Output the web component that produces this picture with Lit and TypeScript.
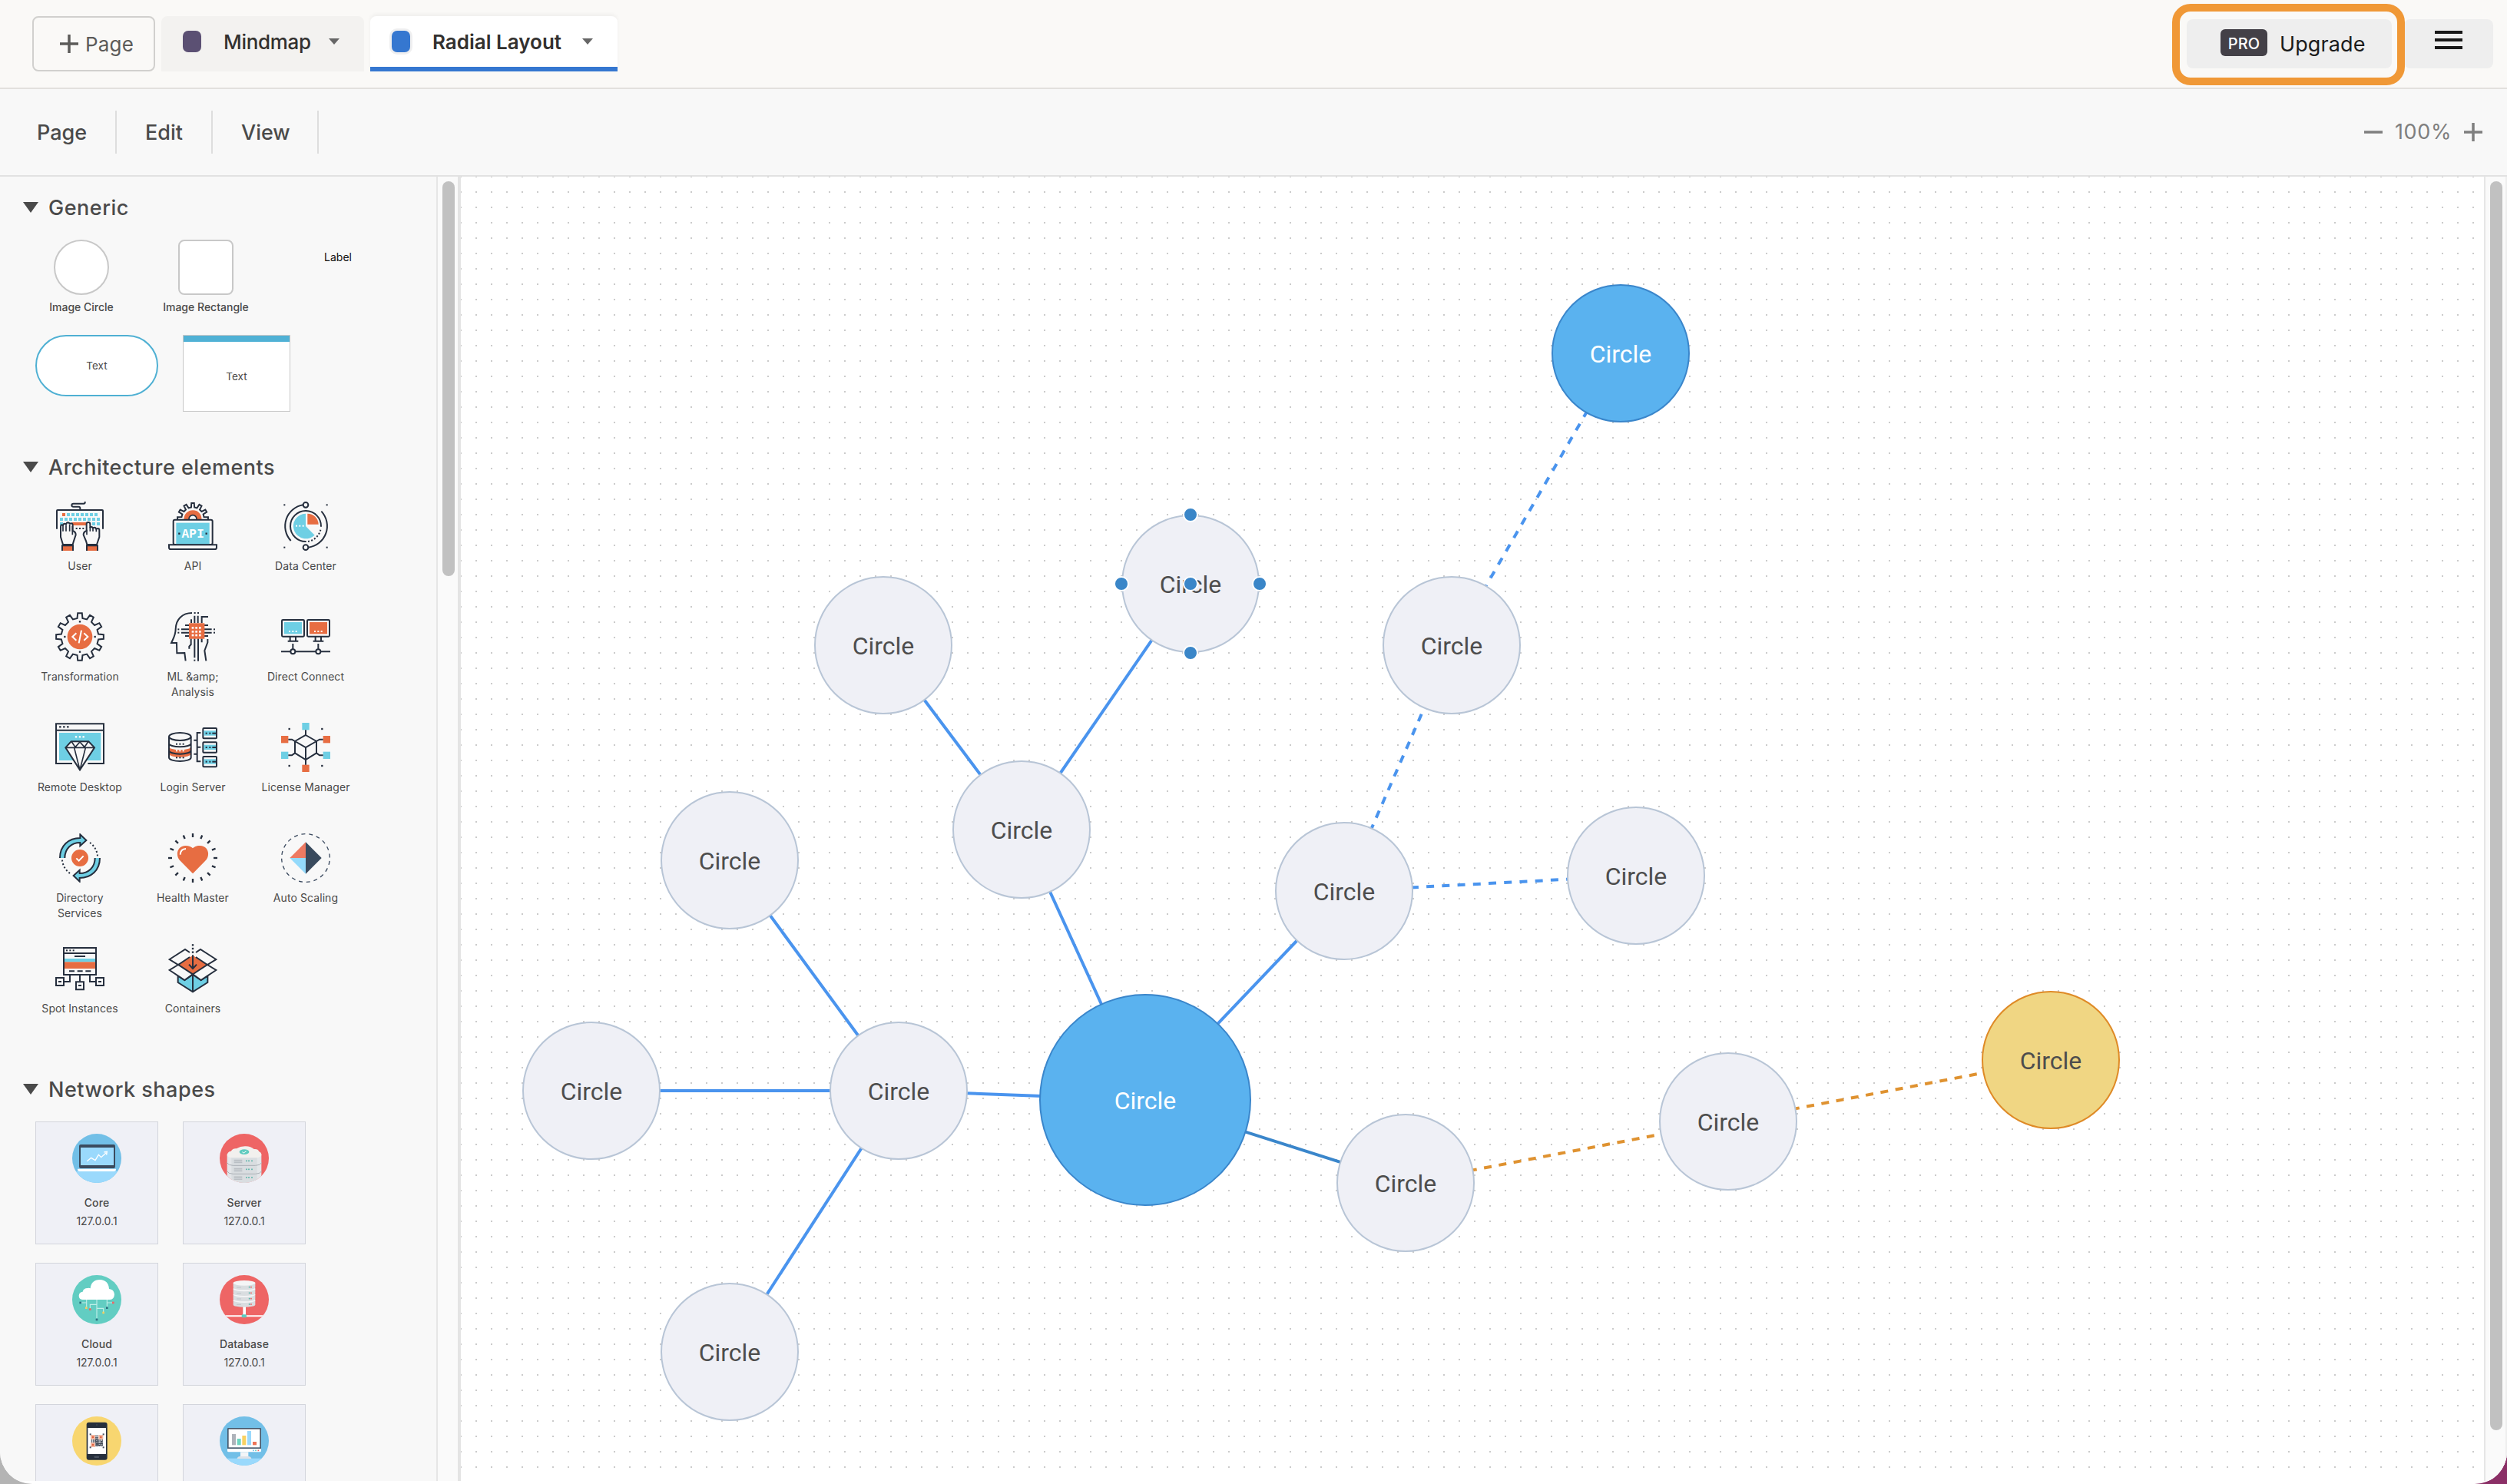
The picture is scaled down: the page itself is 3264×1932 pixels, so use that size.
/**
 * Diagram Editor
 *
 * Page tabs, menu bar, shape palette and a dotted canvas with a radial layout
 */

import { LitElement, html, svg, css, nothing } from 'lit';
import type { SVGTemplateResult } from 'lit';
import { customElement, property } from 'lit/decorators.js';
import { classMap } from 'lit/directives/class-map.js';
import { styleMap } from 'lit/directives/style-map.js';

/**
 * Icon palette
 */
const INK = '#262f3e';
const ORANGE = '#e76d42';
const BLUE = '#6ecfe4';
const PAPER = '#f8f8f8';

type Point = [number, number];

/**
 * Row of small square dots centred on the given points
 */
function dots(points: Point[], size = 6, fill = INK): SVGTemplateResult[] {
  return points.map(
    ([x, y]) => svg`
      <rect x=${x - size / 2} y=${y - size / 2} width=${size} height=${size} fill=${fill} stroke="none"></rect>
    `
  );
}

/**
 * Closed outline of a gear wheel
 */
function gear(cx: number, cy: number, outer: number, inner: number, teeth: number): string {
  const step = (Math.PI * 2) / teeth;
  const at = (radius: number, angle: number) =>
    `${(cx + radius * Math.sin(angle)).toFixed(1)} ${(cy - radius * Math.cos(angle)).toFixed(1)}`;
  const parts: string[] = [];
  for (let i = 0; i < teeth; i++) {
    const a = i * step;
    parts.push(
      at(inner, a - step * 0.27),
      at(outer, a - step * 0.17),
      at(outer, a + step * 0.17),
      at(inner, a + step * 0.27)
    );
  }
  return `M${parts.join('L')}Z`;
}

const KEYS: Point[] = [
  ...[45, 63, 81, 99, 117, 135, 153].map((x): Point => [x + 6, 51]),
  ...[18, 36, 54, 72, 90, 108, 126, 144, 162].map((x): Point => [x + 6, 69]),
  ...[18, 144, 162].map((x): Point => [x + 6, 87]),
];

const LEFT_HAND =
  'M30 168 L21 138 V98 q0-6 4-7 q4 0 5 4 q1-9 6-9 q5 0 6 5 q1-9 7-9 q6 0 7 6 q1-3 6-3 q5 0 6 6 V114 q12 4 12 16 L72 154 L68 168 Z';
const RIGHT_HAND =
  'M162 168 L172 138 V112 q0-7-6-7 q-5 0-6 4 q-1-8-7-8 q-5 0-6 4 q-1-6-6-6 q-5 0-5 4 V88 q0-7-7-7 q-7 0-7 7 V114 q-12 4-12 16 L120 154 L124 168 Z';

/**
 * Icons of the architecture palette, all on a 192 unit grid
 */
const ARCHITECTURE_ICONS: Record<string, SVGTemplateResult> = {
  user: svg`
    <path d="M116 0v4q0 4-5 4H71q-7 0-7 6t7 6h20q6 0 6 6v6" />
    <path d="M6 107V36q0-3 3-3h174q3 0 3 3v71" />
    ${dots([[33, 51]], 12, ORANGE)} ${dots(KEYS, 12, BLUE)}
    <rect x="66" y="81" width="58" height="12" fill=${ORANGE} stroke="none" />
    ${dots([[83, 105], [96, 105], [109, 105]])}
    <path d=${LEFT_HAND} fill=${PAPER} />
    <path d="M30 94v22M42 92v24M56 90v26M67 96v34" stroke-width="5" />
    <path d=${RIGHT_HAND} fill=${PAPER} />
    <path d="M160 106v12M147 104v12M136 100v16M123 110v20" stroke-width="5" />
    <path d="M27 192v-20h42v20M123 192v-20h42v20" fill=${ORANGE} />
  `,
  api: svg`
    <path d=${gear(96, 66, 60, 44, 12)} />
    <circle cx="96" cy="68" r="24" stroke=${ORANGE} stroke-width="21" />
    <circle cx="96" cy="68" r="15" fill=${PAPER} stroke-width="5" />
    <rect x="20" y="71" width="153" height="97" rx="6" fill=${PAPER} />
    <rect x="31" y="83" width="130" height="84" fill=${BLUE} stroke="none" />
    ${dots([[43, 125], [149, 125]], 7)}
    <text class="api" x="97" y="142">API</text>
    <path d="M3 169h186v10q0 7-7 7H10q-7 0-7-7z" fill=${PAPER} />
  `,
  dataCenter: svg`
    <path d="M86 13A84 84 0 0 0 38 153M106 179A84 84 0 0 0 157 38" />
    <circle cx="96" cy="13" r="10" /><circle cx="96" cy="179" r="10" />
    <path d="M156 98A60 60 0 1 0 98 156" />
    <path d="M154 110A60 60 0 0 1 104 156" stroke-dasharray="6 7" />
    <path d="M96 96V47A49 49 0 1 0 131 131Z" fill=${BLUE} stroke="none" />
    <path d="M103 89V47A43 43 0 0 1 146 89Z" fill=${ORANGE} stroke="none" />
    ${dots([[60, 95], [73, 95], [86, 95]], 6, '#fff')}
    ${dots([[13, 13], [179, 13], [13, 179], [179, 179]])}
  `,
  transformation: svg`
    <path d=${gear(96, 96, 93, 73, 12)} />
    <circle cx="96" cy="96" r="49" fill=${ORANGE} stroke="none" />
    ${dots([[96, 37], [96, 155], [37, 96], [155, 96]], 7)}
    <path d="M82 82L67 96l15 14M112 82l15 14-15 14M102 71l-10 50" stroke="#fff" />
  `,
  ml: svg`
    <path d="M93 3C55 3 30 28 29 66C29 90 20 102 12 120H33L34 160L64 159L68 190" />
    <path d="M103 14V43M116 14V43M131 43V18H156M90 28V43M66 51H81M51 67H81M51 80H81M66 93H81" />
    <path d="M141 51H156M141 67H170M141 80H170M141 93H156M103 103V178M117 103V191M131 103V118" />
    <path d="M89 103V126L82 134V143M154 105V118L142 150L148 190" />
    ${dots([[104, 3], [117, 3], [40, 67], [40, 80], [180, 67], [180, 80], [103, 188]])}
    <rect x="81" y="43" width="61" height="61" fill=${ORANGE} stroke="none" />
    ${dots(
      [61, 76, 90].flatMap((y) => [96, 110, 124].map((x): Point => [x, y])),
      8,
      '#fff'
    )}
  `,
  directConnect: svg`
    <rect x="3" y="30" width="87" height="65" rx="4" /><rect x="102" y="30" width="87" height="65" rx="4" />
    <rect x="12" y="39" width="69" height="46" fill=${BLUE} stroke="none" />
    <rect x="111" y="39" width="69" height="46" fill=${ORANGE} stroke="none" />
    ${dots([[33, 75], [46, 75], [59, 75], [132, 75], [145, 75], [158, 75]], 6, '#fff')}
    <path d="M35 96v17M57 96v17M26 113H67M134 96v17M156 96v17M125 113H166" />
    <path d="M46 123v22M145 123v22M0 154H37M55 154H136M154 154H192" />
    <circle cx="46" cy="154" r="9" /><circle cx="145" cy="154" r="9" />
  `,
  remoteDesktop: svg`
    <path d="M66 159H3V4H189V159H127M3 29H189" />
    ${dots([[19, 16], [34, 16], [49, 16]], 7)}
    <rect x="15" y="39" width="163" height="108" fill=${BLUE} stroke="none" />
    ${dots([[81, 55], [96, 55], [110, 55]], 7, '#fff')}
    <path d="M62 73H130L153 97L96 184L40 97Z" fill=${PAPER} />
    <path d="M40 97H153M64 74L78 95L96 75L114 95L128 74M74 98L96 184L118 98" stroke-width="5" />
  `,
  loginServer: svg`
    <path d="M3 93A43 13 0 0 0 89 93V121A43 13 0 0 1 3 121Z" fill=${ORANGE} stroke="none" />
    <ellipse cx="46" cy="54" rx="43" ry="15" />
    <path d="M3 54V136A43 14 0 0 0 89 136V54M3 80A43 14 0 0 0 89 80M3 108A43 14 0 0 0 89 108" />
    ${dots([[33, 83], [46, 83], [59, 83], [33, 136], [46, 136], [59, 136]])}
    ${dots([[33, 109], [46, 109], [59, 109]], 6, '#fff')}
    <path d="M127 39H113V151H127M100 68H113M100 122H113M113 95H127" />
    ${[21, 76, 132].map(
      (y) => svg`
        <rect x="136" y=${y} width="53" height="40" rx="3" />
        <rect x="139" y=${y + 10} width="47" height="19" fill=${BLUE} stroke="none" />
        ${dots([[149, y + 20], [163, y + 20]])}
        <path d=${`M172 ${y + 20}H188`} />
      `
    )}
  `,
  licenseManager: svg`
    ${dots([[96, 14], [14, 127], [178, 127]], 28, BLUE)}
    ${dots([[96, 178], [14, 65], [178, 65]], 28, ORANGE)}
    <path d="M96 48L138 72V118L96 144L54 118V72ZM54 72L96 96L138 72M96 96V144M96 28V48M96 144V164" />
    <path d="M28 65H42L54 72M164 65H150L138 72M28 127H42L54 118M164 127H150L138 118" />
    ${dots([[32, 24], [160, 24], [32, 168], [160, 168]], 7)}
  `,
  directoryServices: svg`
    ${[0, 180].map(
      (turn) => svg`
        <g transform=${`rotate(${turn} 96 96)`}>
          <path d="M18 96C18 48 52 18 97 18V4L121 27L97 49V36C62 36 37 60 37 96" fill=${BLUE} />
          <path d="M135 36A72 72 0 0 1 165 88" stroke-dasharray="6 8" />
        </g>
      `
    )}
    <circle cx="96" cy="96" r="33" fill=${ORANGE} stroke="none" />
    <path d="M82 97l10 10 18-19" stroke="#fff" />
  `,
  healthMaster: svg`
    ${Array.from(
      { length: 16 },
      (_, i) => svg`<path d="M96 0V15" stroke-width="7" transform=${`rotate(${i * 22.5} 96 96)`} />`
    )}
    <path
      d="M96 157L48 108C26 88 34 48 68 48C82 48 90 53 96 58C102 53 110 48 124 48C158 48 166 88 144 108Z"
      fill=${ORANGE} stroke="none"
    />
    <path d="M47 83Q48 61 69 60" stroke="#fff" />
  `,
  autoScaling: svg`
    <circle cx="96" cy="96" r="94" stroke="#3b4a5f" stroke-width="4" stroke-dasharray="15 14.53" stroke-dashoffset="-12" />
    <path d="M96 34V96H34Z" fill="#ee7a62" stroke="none" />
    <path d="M34 96H96V158Z" fill="#94dafb" stroke="none" />
    <path d="M96 34L158 96L96 158Z" fill="#394a5d" stroke="none" />
  `,
  spotInstances: svg`
    <path d="M33 15H159V120H33ZM33 36H159M75 48H117" />
    ${dots([[45, 25], [58, 25], [71, 25]])}
    <rect x="36" y="57" width="120" height="13" fill=${BLUE} stroke="none" />
    <rect x="36" y="70" width="120" height="26" fill=${ORANGE} stroke="none" />
    <path d="M54 106H75M86 106H107M118 106H139M57 120V147H34M96 120V146M135 120V147H158" />
    <path d="M3 132H33V162H3ZM81 148H111V178H81ZM159 132H189V162H159ZM12 147H24M90 162H102M168 147H180" />
  `,
  containers: svg`
    <path d="M38 124V150L96 187L154 150V124L128 141L96 119L64 141Z" fill=${BLUE} />
    <path d="M96 44L153 81L96 118L39 81Z" fill=${ORANGE} stroke="none" />
    <path d="M84 33L66 21L5 60L39 81L84 51M108 33L126 21L187 60L153 81L108 51" />
    <path d="M96 118V187" />
    <path d="M39 81L5 102L64 141L96 118ZM153 81L187 102L128 141L96 118Z" fill=${PAPER} />
    <path d="M96 43V95M81 80L96 96L111 80" />
    ${dots([[96, 4], [96, 18], [96, 32]], 7)}
  `,
};

/**
 * Icons of the network palette, clipped to a circle by the icon element
 */
const NETWORK_ICONS: Record<string, SVGTemplateResult> = {
  core: svg`
    <rect width="192" height="192" fill="#72bfe7" />
    <rect y="146" width="192" height="46" fill="#9ad9fc" />
    <rect x="27" y="42" width="141" height="93" rx="6" fill="#3b4b5e" />
    <rect x="33" y="54" width="129" height="69" fill="#9ad9fc" />
    <path d="M21 137H171V141q0 6-8 6H29q-8 0-8-6z" fill="#fff" />
    <path d="M58 107L74 94L90 104L103 82L113 92L133 74M124 72L136 70L134 83" fill="none" stroke="#fff" stroke-width="4" />
  `,
  server: svg`
    <rect width="192" height="192" fill="#ee6565" />
    <path d="M29 80H163V192H29Z" fill="#e3e6e9" />
    <path d="M46 92H146V192H46Z" fill="#d9dde0" />
    <path d="M29 84Q30 70 44 68Q52 56 66 58Q82 48 102 49Q122 50 134 60Q150 58 154 70Q164 74 163 84Q158 94 142 94H50Q32 94 29 84Z" fill="#f2f0ee" />
    <path d="M28 112Q34 124 52 124H140Q158 124 165 112M28 145Q34 157 52 157H140Q158 157 165 145" fill="none" stroke="#aab0b6" stroke-width="3" />
    <ellipse cx="96" cy="71" rx="19" ry="10" fill="#5fcbbf" />
    <path d="M88 71l6 4 10-7" fill="none" stroke="#fff" stroke-width="3" />
    ${[103, 136, 168].map(
      (y) => svg`
        <path d=${`M56 ${y}H88M56 ${y + 5}H88M56 ${y + 10}H88`} stroke="#b4babf" stroke-width="3" />
        ${dots([[105, y + 3], [114, y + 3], [126, y + 3]], 5, '#55b3a6')}
      `
    )}
  `,
  cloud: svg`
    <rect width="192" height="192" fill="#62cdc2" />
    <path d="M96 94V168M96 115H70V130M96 130H122V144M56 94V126M56 108H34M136 94V126M136 108H158" fill="none" stroke="#bfeee8" stroke-width="3.5" />
    <path d="M40 96Q26 94 26 80Q27 67 41 65Q44 51 60 51Q66 49 71 52Q74 19 108 18Q142 20 144 54Q163 56 165 75Q164 95 148 96Z" fill="#fff" />
    ${dots([[32, 108], [136, 128], [96, 174]], 8, '#2d6f80')}
    ${dots([[160, 108], [70, 134]], 8, '#ee6565')}
    ${dots([[55, 128], [122, 147]], 8, '#f2cf63')}
  `,
  database: svg`
    <rect width="192" height="192" fill="#ee6565" />
    <path d="M0 160H192" stroke="#fff" stroke-width="6" />
    <rect x="91" y="120" width="11" height="40" fill="#fff" />
    <rect x="86" y="154" width="19" height="12" rx="4" fill="#5fcbbf" />
    ${[86, 64, 42, 19].map(
      (y) => svg`
        <path d=${`M53 ${y + 10}V${y + 30}A43 9 0 0 0 139 ${y + 30}V${y + 10}Z`} fill="#d9dde0" />
        <ellipse cx="96" cy=${y + 12} rx="43" ry="10" fill="#f4f5f6" />
        <rect x="66" y=${y + 27} width="18" height="4" fill="#c5cbd0" />
        ${dots([[116, y + 28]], 5, '#55b3a6')} ${dots([[123, y + 28]], 5, '#ee6565')}
      `
    )}
  `,
  mobile: svg`
    <rect width="192" height="192" fill="#f8d670" />
    <rect x="56" y="23" width="81" height="147" rx="9" fill="#262f3c" />
    <rect x="61" y="45" width="71" height="102" fill="#fff" />
    <rect x="86" y="155" width="19" height="7" rx="2" fill="#4a5360" />
    <circle cx="96" cy="33" r="2.5" fill="#4a5360" />
    <path d="M93 74V118M99 74V118M74 93H120M74 99H120M106 104V118M114 96V118M94 106H120M94 112H120" stroke="#3c4552" stroke-width="5" stroke-dasharray="5 2" />
    ${dots([[81, 81], [112, 81], [81, 111]], 18, '#f4b9a3')}
    ${dots([[81, 81], [112, 81], [81, 111]], 7, '#e0603c')}
    ${dots([[71, 70], [122, 70], [71, 121], [122, 121]], 6, '#4a5360')}
  `,
  monitor: svg`
    <rect width="192" height="192" fill="#72bfe7" />
    <rect y="164" width="192" height="28" fill="#9ad9fc" />
    <rect x="30" y="45" width="132" height="90" rx="4" fill="#46586b" />
    <rect x="35" y="50" width="122" height="71" fill="#fff" />
    <path d="M30 126H162V134q0 5-5 5H35q-5 0-5-5z" fill="#fff" />
    <rect x="81" y="139" width="31" height="18" fill="#f3f5f7" />
    <path d="M68 165q2-9 12-9h32q10 0 12 9z" fill="#dde2e8" />
    <rect x="48" y="69" width="15" height="43" fill="#aeb3ba" />
    <rect x="68" y="87" width="15" height="25" fill="#6fd5c0" />
    <rect x="88" y="75" width="15" height="37" fill="#f8d162" />
    <rect x="108" y="57" width="15" height="55" fill="#9ad9fc" />
    <rect x="129" y="99" width="15" height="13" fill="#ee7458" />
    ${dots([[132, 133]], 5, '#72bfe7')} ${dots([[141, 133]], 5, '#5fcbbf')} ${dots([[151, 133]], 5, '#ee6565')}
  `,
};

interface PaletteItem {
  icon: string;
  label?: string;
}

const ARCHITECTURE_ITEMS: PaletteItem[] = [
  { icon: 'user', label: 'User' },
  { icon: 'api', label: 'API' },
  { icon: 'dataCenter', label: 'Data Center' },
  { icon: 'transformation', label: 'Transformation' },
  { icon: 'ml', label: 'ML &amp; Analysis' },
  { icon: 'directConnect', label: 'Direct Connect' },
  { icon: 'remoteDesktop', label: 'Remote Desktop' },
  { icon: 'loginServer', label: 'Login Server' },
  { icon: 'licenseManager', label: 'License Manager' },
  { icon: 'directoryServices', label: 'Directory Services' },
  { icon: 'healthMaster', label: 'Health Master' },
  { icon: 'autoScaling', label: 'Auto Scaling' },
  { icon: 'spotInstances', label: 'Spot Instances' },
  { icon: 'containers', label: 'Containers' },
];

const NETWORK_ITEMS: PaletteItem[] = [
  { icon: 'core', label: 'Core' },
  { icon: 'server', label: 'Server' },
  { icon: 'cloud', label: 'Cloud' },
  { icon: 'database', label: 'Database' },
  { icon: 'mobile' },
  { icon: 'monitor' },
];

/**
 * Diagram node, positioned by its centre on the canvas
 */
interface DiagramNode {
  id: string;
  x: number;
  y: number;
  size?: number;
  tone?: 'blue' | 'yellow';
  selected?: boolean;
}

/**
 * Diagram edge; dash is the dash period along the line
 */
interface DiagramEdge {
  from: string;
  to: string;
  color?: string;
  dash?: number;
}

const NODES: DiagramNode[] = [
  { id: 'root', x: 891, y: 1202, size: 276, tone: 'blue' },
  { id: 'top', x: 730, y: 850 },
  { id: 'top-left', x: 550, y: 610 },
  { id: 'top-right', x: 950, y: 530, selected: true },
  { id: 'left', x: 570, y: 1190 },
  { id: 'left-top', x: 350, y: 890 },
  { id: 'left-middle', x: 170, y: 1190 },
  { id: 'left-bottom', x: 350, y: 1530 },
  { id: 'right', x: 1150, y: 930 },
  { id: 'right-side', x: 1530, y: 910 },
  { id: 'right-up', x: 1290, y: 610 },
  { id: 'right-end', x: 1510, y: 230, tone: 'blue' },
  { id: 'bottom', x: 1230, y: 1310 },
  { id: 'bottom-next', x: 1650, y: 1230 },
  { id: 'bottom-end', x: 2070, y: 1150, tone: 'yellow' },
];

const EDGES: DiagramEdge[] = [
  { from: 'root', to: 'top' },
  { from: 'top', to: 'top-left' },
  { from: 'top', to: 'top-right' },
  { from: 'root', to: 'left' },
  { from: 'left', to: 'left-top' },
  { from: 'left', to: 'left-middle' },
  { from: 'left', to: 'left-bottom' },
  { from: 'root', to: 'right' },
  { from: 'root', to: 'bottom', color: '#3a86cb' },
  { from: 'right-side', to: 'right', dash: 20.25 },
  { from: 'right-up', to: 'right', dash: 19.6 },
  { from: 'right-up', to: 'right-end', dash: 20.2 },
  { from: 'bottom-next', to: 'bottom', color: '#df9230', dash: 19.6 },
  { from: 'bottom-end', to: 'bottom-next', color: '#df9230', dash: 19.6 },
];

const HANDLES = ['top', 'right', 'bottom', 'left', 'center'];

@customElement('palette-icon')
export class PaletteIcon extends LitElement {
  @property({ type: String })
  name = '';

  static override styles = css`
    :host {
      display: block;
      width: 64px;
      height: 64px;
    }

    svg {
      display: block;
      width: 100%;
      height: 100%;
    }

    .line {
      fill: none;
      stroke: #262f3e;
      stroke-width: 6;
    }

    .api {
      fill: #fff;
      stroke: none;
      font: bold 48px 'Liberation Mono', monospace;
      letter-spacing: 1px;
      text-anchor: middle;
    }

    .round {
      border-radius: 50%;
    }
  `;

  override render() {
    if (this.name in NETWORK_ICONS) {
      return html`<svg class="round" viewBox="0 0 192 192">${NETWORK_ICONS[this.name]}</svg>`;
    }
    return html`
      <svg viewBox="0 0 192 192"><g class="line">${ARCHITECTURE_ICONS[this.name]}</g></svg>
    `;
  }
}

@customElement('shape-palette')
export class ShapePalette extends LitElement {
  static override styles = css`
    :host {
      display: flex;
      flex-direction: column;
      box-sizing: border-box;
      width: 568px;
      padding-top: 20px;
      overflow: hidden;
      color: #4a4a4a;
      font-size: 14px;
      line-height: 20px;
    }

    .section {
      display: flex;
      flex: none;
      align-items: center;
      gap: 13px;
      height: 40px;
      padding-left: 30px;
      font-size: 27px;
      font-weight: 450;
      letter-spacing: 0.5px;
    }

    .section span {
      padding-top: 1px;
    }

    .triangle {
      width: 20px;
      height: 14px;
      background: #4a4a4a;
      clip-path: polygon(0 0, 100% 0, 50% 100%);
    }

    .samples {
      display: grid;
      flex: none;
      grid-template-columns: 162px 162px 182px;
      margin: 22px 0 26px 25px;
      font-weight: 500;
      text-align: center;
    }

    .sample {
      box-sizing: border-box;
      width: 72px;
      height: 72px;
      margin: 0 auto 6px;
      border: 2px solid #c8c8c8;
      border-radius: 8px;
      background: #fff;
    }

    .sample.circle {
      border-radius: 50%;
    }

    .label {
      padding-top: 13px;
      color: #111;
      font-weight: 400;
    }

    .texts {
      display: flex;
      flex: none;
      align-items: flex-start;
      gap: 32px;
      margin: 0 0 52px 46px;
      font-size: 13.5px;
    }

    .pill,
    .note {
      display: flex;
      box-sizing: border-box;
      align-items: center;
      justify-content: center;
      background: #fff;
    }

    .pill {
      width: 160px;
      height: 80px;
      border: 2px solid #4fb0d3;
      border-radius: 40px;
    }

    .note {
      width: 140px;
      height: 100px;
      border: 1px solid #c8c8c8;
      box-shadow: inset 0 8px #50b1d5;
      padding-top: 8px;
    }

    .architecture {
      display: grid;
      flex: none;
      grid-template-columns: repeat(3, 147px);
      grid-auto-rows: 144px;
      margin: 25px 0 25px 30.5px;
    }

    .item {
      display: flex;
      flex-direction: column;
      align-items: center;
      gap: 10px;
      letter-spacing: 0.08px;
      text-align: center;
    }

    .item span {
      max-width: 118px;
    }

    .item.narrow span {
      max-width: 80px;
    }

    .network {
      display: grid;
      flex: none;
      grid-template-columns: 160px 160px;
      grid-auto-rows: 160px;
      gap: 24px 32px;
      margin: 22px 0 0 46px;
    }

    .card {
      display: flex;
      flex-direction: column;
      align-items: center;
      padding-top: 15px;
      border: 1px solid #d3d5dc;
      background: #eff0f6;
      line-height: 24px;
    }

    .card palette-icon {
      margin-bottom: 14px;
    }

    .name {
      font-weight: 450;
      letter-spacing: 0.1px;
    }
  `;

  override render() {
    return html`
      ${this.renderSection('Generic')}
      <div class="samples">
        <div>
          <div class="sample circle"></div>
          Image Circle
        </div>
        <div>
          <div class="sample"></div>
          Image Rectangle
        </div>
        <div class="label">Label</div>
      </div>
      <div class="texts">
        <div class="pill">Text</div>
        <div class="note">Text</div>
      </div>
      ${this.renderSection('Architecture elements')}
      <div class="architecture">
        ${ARCHITECTURE_ITEMS.map(
          (item) => html`
            <div class=${classMap({ item: true, narrow: item.label!.length > 15 })}>
              <palette-icon name=${item.icon}></palette-icon>
              <span>${item.label}</span>
            </div>
          `
        )}
      </div>
      ${this.renderSection('Network shapes')}
      <div class="network">
        ${NETWORK_ITEMS.map(
          (item) => html`
            <div class="card">
              <palette-icon name=${item.icon}></palette-icon>
              ${item.label
                ? html`<span class="name">${item.label}</span><span>127.0.0.1</span>`
                : nothing}
            </div>
          `
        )}
      </div>
    `;
  }

  private renderSection(title: string) {
    return html`<div class="section"><i class="triangle"></i><span>${title}</span></div>`;
  }
}

@customElement('diagram-canvas')
export class DiagramCanvas extends LitElement {
  static override styles = css`
    :host {
      display: block;
      position: relative;
      flex: 1;
      overflow: hidden;
      background: #fff;
      font-family: Roboto, sans-serif;
    }

    svg {
      display: block;
      width: 100%;
      height: 100%;
    }

    .node {
      display: flex;
      position: absolute;
      box-sizing: border-box;
      align-items: center;
      justify-content: center;
      padding-top: 2px;
      transform: translate(-50%, -50%);
      border: 2px solid #b8c5d6;
      border-radius: 50%;
      background: #eff0f6;
      color: #4d4d4d;
      font-size: 32px;
    }

    .node.blue {
      border-color: #3a86cb;
      background: #5ab2ef;
      color: #fff;
    }

    .node.yellow {
      border-color: #df8a26;
      background: #f0d683;
    }

    .handle {
      position: absolute;
      width: 16px;
      height: 16px;
      transform: translate(-50%, -50%);
      border: 2px solid #fff;
      border-radius: 50%;
      background: #3a86c8;
    }

    .handle.top {
      top: -2px;
      left: 50%;
    }

    .handle.right {
      top: 50%;
      left: calc(100% + 2px);
    }

    .handle.bottom {
      top: calc(100% + 2px);
      left: 50%;
    }

    .handle.left {
      top: 50%;
      left: -2px;
    }

    .handle.center {
      top: 50%;
      left: 50%;
    }
  `;

  override render() {
    return html`
      <svg>
        <defs>
          <pattern id="grid" x="-10" y="-10" width="20" height="20" patternUnits="userSpaceOnUse">
            <rect x="9" y="9" width="2" height="2" fill="#cbcbcb" />
          </pattern>
        </defs>
        <rect width="2630" height="100%" fill="url(#grid)" />
        ${EDGES.map((edge) => this.renderEdge(edge))}
      </svg>
      ${NODES.map((node) => this.renderNode(node))}
    `;
  }

  private renderEdge(edge: DiagramEdge) {
    const from = NODES.find((node) => node.id === edge.from)!;
    const to = NODES.find((node) => node.id === edge.to)!;
    return svg`
      <line
        x1=${from.x} y1=${from.y} x2=${to.x} y2=${to.y}
        stroke=${edge.color ?? '#4a94ee'}
        stroke-width="4"
        stroke-dasharray=${edge.dash ? `10 ${(edge.dash - 10).toFixed(2)}` : 'none'}
      ></line>
    `;
  }

  private renderNode(node: DiagramNode) {
    const size = `${node.size ?? 180}px`;
    const classes = {
      node: true,
      blue: node.tone === 'blue',
      yellow: node.tone === 'yellow',
    };
    return html`
      <div
        class=${classMap(classes)}
        style=${styleMap({ left: `${node.x}px`, top: `${node.y}px`, width: size, height: size })}
      >
        Circle
        ${node.selected ? HANDLES.map((side) => html`<i class="handle ${side}"></i>`) : nothing}
      </div>
    `;
  }
}

@customElement('app-root')
export class AppRoot extends LitElement {
  static override styles = css`
    :host {
      display: block;
      height: 1932px;
      background: linear-gradient(to right, #b4b4b4 50%, #8b2f66 50%);
      font-family: Inter, sans-serif;
    }

    .window {
      display: flex;
      flex-direction: column;
      box-sizing: border-box;
      height: 1932px;
      padding-bottom: 4px;
      overflow: hidden;
      border-radius: 0 0 42px 42px;
      background: #fff;
    }

    header {
      display: flex;
      flex: none;
      align-items: flex-start;
      box-sizing: border-box;
      height: 116px;
      padding: 0 18px 0 42px;
      border-bottom: 2px solid #e2e0de;
      background: #faf9f7;
      font-size: 26px;
    }

    .tabs {
      display: flex;
      gap: 8px;
      margin-top: 21px;
    }

    .add-page {
      display: flex;
      box-sizing: border-box;
      align-items: center;
      gap: 9px;
      width: 160px;
      height: 72px;
      padding-left: 34px;
      border: 2px solid #d1d0ce;
      border-radius: 8px;
      color: #5c5b59;
      letter-spacing: 0.2px;
    }

    .tab {
      display: flex;
      box-sizing: border-box;
      align-items: center;
      height: 72px;
      padding: 0 32px 6px 28px;
      border-radius: 8px 8px 0 0;
      background: #f3f2f0;
      color: #33312f;
      font-weight: 500;
      letter-spacing: -0.3px;
    }

    .tab.mindmap {
      width: 264px;
    }

    .tab.active {
      width: 322px;
      padding-bottom: 0;
      border-bottom: 6px solid #3577d0;
      background: #fff;
      box-shadow: 0 -3px 4px rgba(0, 0, 0, 0.04);
      font-weight: 600;
      letter-spacing: 0;
    }

    .tab span {
      padding-top: 1px;
    }

    .swatch {
      width: 24px;
      height: 28px;
      margin-right: 29px;
      border-radius: 7px;
      background: #5b5073;
    }

    .active .swatch {
      background: #3577d0;
      box-shadow: 0 0 0 3px #efeff0;
    }

    .caret {
      width: 14px;
      height: 8px;
      margin-left: auto;
      background: #666;
      clip-path: polygon(0 0, 100% 0, 50% 100%);
    }

    .highlight {
      position: relative;
      z-index: 1;
      margin: 5px -1px 0 auto;
      padding: 10px 7px 12px 9px;
      border: 10px solid #f09836;
      border-radius: 24px;
    }

    .upgrade {
      display: flex;
      box-sizing: border-box;
      align-items: center;
      gap: 16px;
      width: 267px;
      height: 64px;
      padding-left: 44px;
      border-radius: 8px;
      background: #eee;
      color: #1b1b1b;
      font-size: 27px;
      letter-spacing: 0.1px;
    }

    .badge {
      width: 61px;
      height: 35px;
      margin-top: -3px;
      border-radius: 6px;
      background: #434047;
      color: #fff;
      font-size: 20px;
      font-weight: 500;
      line-height: 38px;
      text-align: center;
    }

    .menu {
      display: flex;
      box-sizing: border-box;
      flex-direction: column;
      align-items: center;
      gap: 6px;
      width: 116px;
      height: 64px;
      margin-top: 25px;
      padding-top: 15px;
      border-radius: 8px;
      background: #eee;
    }

    .menu i {
      width: 36px;
      height: 4px;
      background: #181818;
    }

    .toolbar {
      display: flex;
      flex: none;
      align-items: center;
      box-sizing: border-box;
      height: 114px;
      padding-right: 32px;
      border-bottom: 2px solid #e2e2e2;
      background: #f8f8f8;
      color: #4a4a4a;
      font-size: 27px;
      line-height: 58px;
    }

    .entry {
      box-sizing: border-box;
      width: 125px;
      height: 56px;
      padding-left: 37px;
      border-right: 2px solid #dedede;
      font-weight: 450;
    }

    .entry:first-child {
      width: 152px;
      padding-left: 48px;
    }

    .entry:nth-child(3) {
      width: 138px;
    }

    .zoom {
      display: flex;
      align-items: center;
      gap: 16px;
      margin-left: auto;
      color: #7f7f7f;
      letter-spacing: 0.6px;
    }

    .zoom svg,
    .add-page svg {
      width: 24px;
      height: 24px;
      fill: none;
      stroke: currentColor;
      stroke-width: 3.5;
    }

    .workspace {
      display: flex;
      flex: 1;
      min-height: 0;
      background: #f8f8f8;
    }

    .track {
      flex: none;
      box-sizing: border-box;
      width: 32px;
      padding: 6px 4px 0 6px;
      border-right: 4px solid #e4e4e4;
      border-left: 2px solid #e6e6e6;
      background: #fafafa;
    }

    .track.right {
      width: 30px;
      padding-right: 4px;
      border-right: 2px solid #eee;
    }

    .thumb {
      width: 16px;
      height: 514px;
      border-radius: 8px;
      background: #c1c1c1;
    }

    .right .thumb {
      height: 1626px;
    }
  `;

  override render() {
    return html`
      <div class="window">
        <header>
          <div class="tabs">
            <div class="add-page">
              <svg viewBox="0 0 24 24"><path d="M12 0V24M0 12H24" /></svg>
              Page
            </div>
            <div class="tab mindmap">
              <i class="swatch"></i>
              <span>Mindmap</span>
              <i class="caret"></i>
            </div>
            <div class="tab active">
              <i class="swatch"></i>
              <span>Radial Layout</span>
              <i class="caret"></i>
            </div>
          </div>
          <div class="highlight">
            <div class="upgrade"><span class="badge">PRO</span>Upgrade</div>
          </div>
          <div class="menu"><i></i><i></i><i></i></div>
        </header>
        <nav class="toolbar">
          ${['Page', 'Edit', 'View'].map((entry) => html`<div class="entry">${entry}</div>`)}
          <div class="zoom">
            <svg viewBox="0 0 24 24"><path d="M0 12H24" /></svg>
            100%
            <svg viewBox="0 0 24 24"><path d="M12 0V24M0 12H24" /></svg>
          </div>
        </nav>
        <div class="workspace">
          <shape-palette></shape-palette>
          <div class="track"><div class="thumb"></div></div>
          <diagram-canvas></diagram-canvas>
          <div class="track right"><div class="thumb"></div></div>
        </div>
      </div>
    `;
  }
}

declare global {
  interface HTMLElementTagNameMap {
    'palette-icon': PaletteIcon;
    'shape-palette': ShapePalette;
    'diagram-canvas': DiagramCanvas;
    'app-root': AppRoot;
  }
}
